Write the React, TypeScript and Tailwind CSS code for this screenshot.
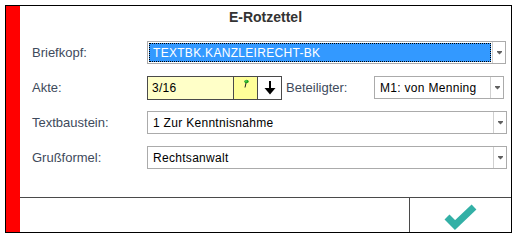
import React from "react";

const Caret = () => (
  <svg width="5" height="4" viewBox="0 0 5 4">
    <rect x="0" y="0" width="5" height="1" fill="#606060" />
    <polygon points="0,1 5,1 2.5,3.5" fill="#606060" />
  </svg>
);

const Select = ({ text, width, focused }: { text: string; width: string; focused?: boolean }) => (
  <div className={`flex h-[23px] ${width} border border-[#ababab] bg-white`}>
    <div className="flex-1 min-w-0 p-px">
      {focused ? (
        <div className="h-full bg-[#3399ff] border border-dotted border-black flex items-center pl-[3px] text-white tracking-[0.3px]">
          {text}
        </div>
      ) : (
        <div className="h-full flex items-center pl-[4px] text-black tracking-[0.3px]">{text}</div>
      )}
    </div>
    <div className="w-[13px] border-l border-[#d0d0d0] flex items-center justify-center">
      <Caret />
    </div>
  </div>
);

export default function App() {
  return (
    <div
      className="w-[523px] h-[243px] bg-white pt-[5px] pl-[5px]"
      style={{ fontFamily: '"Liberation Sans", Arial, sans-serif' }}
    >
      <div className="w-[507px] h-[228px] border border-black flex">
        <div className="w-[14px] bg-[#ff0000]" />
        <div className="flex-1 flex flex-col">
          <div className="h-[22px] flex items-center justify-center text-[14px] font-bold text-[#333]">
            E-Rotzettel
          </div>
          <div className="flex-1 pt-[13px] pl-[12px] flex flex-col gap-[12px] text-[12px]">
            <div className="flex items-center h-[23px]">
              <div className="w-[115px] text-[13px] text-[#3e4a5c]">Briefkopf:</div>
              <Select text="TEXTBK.KANZLEIRECHT-BK" width="w-[359px]" focused />
            </div>
            <div className="flex items-center h-[23px]">
              <div className="w-[115px] text-[13px] text-[#3e4a5c]">Akte:</div>
              <div className="flex h-[24px] border border-[#4a4a4a]">
                <div className="w-[85px] bg-[#ffffc8] flex items-center pl-[4px] text-black tracking-[0.3px]">3/16</div>
                <div className="w-[24px] bg-[#ffff99] border-l border-[#4a4a4a] flex justify-center pt-[2px]">
                  <svg width="8" height="9" viewBox="0 0 8 9">
                    <line x1="3" y1="8.5" x2="4" y2="4" stroke="#222" strokeWidth="1" />
                    <ellipse cx="4.5" cy="2.5" rx="2.2" ry="1.8" fill="#1aa31a" />
                    <circle cx="4" cy="2" r="0.8" fill="#7de07d" />
                  </svg>
                </div>
                <div className="w-[24px] bg-white border-l border-[#4a4a4a] flex items-center justify-center">
                  <svg width="12" height="14" viewBox="0 0 12 14">
                    <line x1="6" y1="0" x2="6" y2="9" stroke="#000" strokeWidth="2" />
                    <polygon points="0.5,7 11.5,7 6,13.5" fill="#000" />
                  </svg>
                </div>
              </div>
              <div className="w-[92px] pl-[4px] text-[13px] text-[#3e4a5c]">Beteiligter:</div>
              <Select text="M1: von Menning" width="w-[130px]" />
            </div>
            <div className="flex items-center h-[23px]">
              <div className="w-[115px] text-[13px] text-[#3e4a5c]">Textbaustein:</div>
              <Select text="1 Zur Kenntnisnahme" width="w-[360px]" />
            </div>
            <div className="flex items-center h-[23px]">
              <div className="w-[115px] text-[13px] text-[#3e4a5c]">Grußformel:</div>
              <Select text="Rechtsanwalt" width="w-[360px]" />
            </div>
          </div>
          <div className="h-[35px] border-t border-[#4a4a4a] flex">
            <div className="w-[390px] border-r border-[#4a4a4a]" />
            <div className="flex-1 flex items-center justify-center pt-[2px]">
              <svg width="34" height="28" viewBox="0 0 34 28">
                <polyline
                  points="3,15 11,23 30,5"
                  fill="none"
                  stroke="#33b0a6"
                  strokeWidth="7"
                  strokeLinecap="butt"
                  strokeLinejoin="miter"
                />
              </svg>
            </div>
          </div>
        </div>
      </div>
    </div>
  );
}
